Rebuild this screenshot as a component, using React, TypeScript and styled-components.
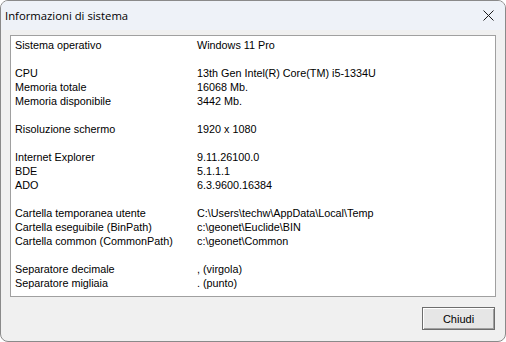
import React from 'react';
import styled, { createGlobalStyle } from 'styled-components';

const GlobalStyle = createGlobalStyle`
  html, body {
    margin: 0;
    padding: 0;
    background: #ffffff;
  }
  #root {
    width: 506px;
    height: 342px;
  }
`;

const Window = styled.div`
  box-sizing: border-box;
  width: 506px;
  height: 342px;
  background: #f0f0f0;
  border: 1px solid #8a8a8a;
  border-radius: 8px;
  overflow: hidden;
  display: flex;
  flex-direction: column;
  font-family: 'Liberation Sans', Arial, sans-serif;
`;

const TitleBar = styled.div`
  height: 29px;
  flex: none;
  display: flex;
  align-items: center;
  justify-content: space-between;
  padding: 0 0 0 4px;
  background: #eef2f8;
`;

const Title = styled.span`
  font-family: 'Open Sans', 'Noto Sans', sans-serif;
  font-size: 11.3px;
  color: #000;
`;

const CloseBox = styled.div`
  width: 34px;
  height: 29px;
  display: flex;
  align-items: center;
  justify-content: center;
`;

const Body = styled.div`
  flex: 1;
  display: flex;
  flex-direction: column;
  padding: 5px 9px 11px 9px;
  gap: 10px;
`;

const Panel = styled.div`
  flex: 1;
  background: #ffffff;
  border: 1px solid #a0a0a0;
  padding: 2px 4px;
  display: flex;
  flex-direction: column;
`;

const Group = styled.div`
  display: flex;
  flex-direction: column;
  & + & {
    margin-top: 14px;
  }
`;

const Row = styled.div`
  display: grid;
  grid-template-columns: 182px 1fr;
  height: 14px;
  line-height: 14px;
  font-size: 10.8px;
  color: #000;
  white-space: nowrap;
`;

const Footer = styled.div`
  display: flex;
  justify-content: flex-end;
  padding-right: 1px;
`;

const Button = styled.button`
  width: 73px;
  height: 23px;
  box-sizing: border-box;
  background: #e6e6e6;
  border: 1px solid #6d6d6d;
  box-shadow: inset 1px 1px 0 #ffffff, inset -1px -1px 0 #a0a0a0;
  font-family: 'Liberation Sans', Arial, sans-serif;
  font-size: 11px;
  color: #000;
  padding: 0;
`;

const groups: [string, string][][] = [
  [['Sistema operativo', 'Windows 11 Pro']],
  [
    ['CPU', '13th Gen Intel(R) Core(TM) i5-1334U'],
    ['Memoria totale', '16068 Mb.'],
    ['Memoria disponibile', '3442 Mb.'],
  ],
  [['Risoluzione schermo', '1920 x 1080']],
  [
    ['Internet Explorer', '9.11.26100.0'],
    ['BDE', '5.1.1.1'],
    ['ADO', '6.3.9600.16384'],
  ],
  [
    ['Cartella temporanea utente', 'C:\\Users\\techw\\AppData\\Local\\Temp'],
    ['Cartella eseguibile (BinPath)', 'c:\\geonet\\Euclide\\BIN'],
    ['Cartella common (CommonPath)', 'c:\\geonet\\Common'],
  ],
  [
    ['Separatore decimale', ', (virgola)'],
    ['Separatore migliaia', '. (punto)'],
  ],
];

const App: React.FC = () => {
  return (
    <>
      <GlobalStyle />
      <Window>
        <TitleBar>
          <Title>Informazioni di sistema</Title>
          <CloseBox>
            <svg width="11" height="11" viewBox="0 0 11 11">
              <path d="M0.5 0.5 L10.5 10.5 M10.5 0.5 L0.5 10.5" stroke="#1a1a1a" strokeWidth="1" />
            </svg>
          </CloseBox>
        </TitleBar>
        <Body>
          <Panel>
            {groups.map((g, i) => (
              <Group key={i}>
                {g.map(([label, value]) => (
                  <Row key={label}>
                    <span>{label}</span>
                    <span>{value}</span>
                  </Row>
                ))}
              </Group>
            ))}
          </Panel>
          <Footer>
            <Button>Chiudi</Button>
          </Footer>
        </Body>
      </Window>
    </>
  );
};

export default App;
